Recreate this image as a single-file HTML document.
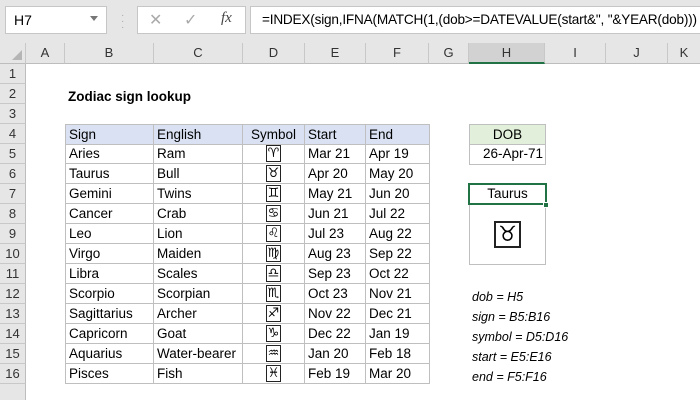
<!DOCTYPE html>
<html><head><style>
*{margin:0;padding:0;box-sizing:border-box}
body{width:700px;height:400px;overflow:hidden;background:#fff;font-family:"Liberation Sans",Calibri,sans-serif;position:relative;font-size:13px;color:#000}
.a{position:absolute}
.top{left:0;top:0;width:700px;height:43px;background:#e6e6e6}
.nb{left:5px;top:6px;width:102px;height:28px;background:#fff;border:1px solid #c6c6c6;font-size:14px;padding:5px 0 0 8px}
.fx{left:137px;top:6px;width:109px;height:28px;background:#fff;border:1px solid #c6c6c6}
.fb{left:250px;top:6px;width:450px;height:28px;background:#fff;border:1px solid #c6c6c6;border-right:none;font-size:13.6px;letter-spacing:-0.2px;padding:5px 0 0 11px;white-space:nowrap;overflow:hidden}
.ch{top:43px;height:21px;background:#e6e6e6;border-right:1px solid #c8c8c8;border-bottom:1px solid #bdbdbd;text-align:center;font-size:13px;color:#333;line-height:20px;overflow:hidden}
.rh{left:0;width:26px;height:20px;background:#e6e6e6;border-bottom:1px solid #c8c8c8;border-right:1px solid #bdbdbd;text-align:center;color:#333;line-height:20px;font-size:13px}
.c{height:20px;border-right:1px solid #bfbfbf;border-bottom:1px solid #bfbfbf;line-height:20px;padding-left:3px;white-space:nowrap;font-size:13.5px}
.s{display:inline-block;width:15px;height:17px;border:1px solid #222;line-height:15px;text-align:center;font-family:"DejaVu Sans",sans-serif;font-size:13px;vertical-align:middle;margin-top:-2px}
.i{font-style:italic;font-size:12.5px}
</style></head><body>
<div class="a top"></div>
<div class="a nb">H7<span style="position:absolute;right:8px;top:9px;border:4px solid transparent;border-top:5px solid #777"></span></div>
<div class="a" style="left:121px;top:13px;color:#aaa;font-size:10px;line-height:6px">·<br>·<br>·</div>
<div class="a fx"><span class="a" style="left:11px;top:3px;color:#aaa;font-size:16px">✕</span><span class="a" style="left:46px;top:3px;color:#aaa;font-size:16px">✓</span><span class="a" style="left:83px;top:3px;color:#444;font-family:'Liberation Serif',serif;font-style:italic;font-size:15px">fx</span></div>
<div class="a fb">=INDEX(sign,IFNA(MATCH(1,(dob&gt;=DATEVALUE(start&amp;", "&amp;YEAR(dob)))</div>
<div class="a ch" style="left:0;width:26px"><span class="a" style="right:3px;bottom:3px;border:5px solid transparent;border-right-color:#b5b5b5;border-bottom-color:#b5b5b5"></span></div>
<div class="a ch" style="left:26px;width:39px">A</div>
<div class="a ch" style="left:65px;width:89px">B</div>
<div class="a ch" style="left:154px;width:89px">C</div>
<div class="a ch" style="left:243px;width:62px">D</div>
<div class="a ch" style="left:305px;width:61px">E</div>
<div class="a ch" style="left:366px;width:63px">F</div>
<div class="a ch" style="left:429px;width:40px">G</div>
<div class="a ch" style="left:469px;width:76px;background:#d2d2d2;border-bottom:2px solid #217346">H</div>
<div class="a ch" style="left:545px;width:61px">I</div>
<div class="a ch" style="left:606px;width:62px">J</div>
<div class="a ch" style="left:668px;width:32px;border-right:none">K</div>
<div id="rows"></div>
<div class="a" style="left:68px;top:89px;font-weight:bold;font-size:13.5px">Zodiac sign lookup</div>
<div id="tbl"></div>
<div class="a c" style="left:469px;top:124px;width:77px;background:#e2efda;border:1px solid #bfbfbf;text-align:center;padding:0;height:21px">DOB</div>
<div class="a c" style="left:469px;top:144px;width:77px;border:1px solid #bfbfbf;border-top:none;text-align:right;padding-right:2px;height:21px">26-Apr-71</div>
<div class="a" style="left:469px;top:184px;width:77px;height:81px;border:1px solid #bfbfbf"></div>
<div class="a" style="left:468px;top:183px;width:79px;height:22px;border:2px solid #217346;text-align:center;line-height:18px;font-size:13.5px">Taurus</div>
<div class="a" style="left:543px;top:202px;width:6px;height:6px;background:#217346;border:1px solid #fff"></div>
<div class="a" style="left:494px;top:221px;width:27px;height:27px;border:2px solid #222;text-align:center;line-height:23px;font-family:'DejaVu Sans',sans-serif;font-size:21px">♉&#xFE0E;</div>
<div class="a i" style="left:472px;top:290px">dob = H5</div>
<div class="a i" style="left:472px;top:310px">sign = B5:B16</div>
<div class="a i" style="left:472px;top:330px">symbol = D5:D16</div>
<div class="a i" style="left:472px;top:350px">start = E5:E16</div>
<div class="a i" style="left:472px;top:370px">end = F5:F16</div>
<script>
var r='';for(var i=1;i<=16;i++){r+='<div class="a rh" style="top:'+(44+i*20)+'px">'+i+'</div>';}
r+='<div class="a rh" style="top:384px;height:16px;border-bottom:none"></div>';
document.getElementById('rows').outerHTML=r;
var d=[["Sign","English","Symbol","Start","End"],["Aries","Ram","♈","Mar 21","Apr 19"],["Taurus","Bull","♉","Apr 20","May 20"],["Gemini","Twins","♊","May 21","Jun 20"],["Cancer","Crab","♋","Jun 21","Jul 22"],["Leo","Lion","♌","Jul 23","Aug 22"],["Virgo","Maiden","♍","Aug 23","Sep 22"],["Libra","Scales","♎","Sep 23","Oct 22"],["Scorpio","Scorpian","♏","Oct 23","Nov 21"],["Sagittarius","Archer","♐","Nov 22","Dec 21"],["Capricorn","Goat","♑","Dec 22","Jan 19"],["Aquarius","Water-bearer","♒","Jan 20","Feb 18"],["Pisces","Fish","♓","Feb 19","Mar 20"]];
var xs=[65,154,243,305,366,430],t='';
d.forEach(function(row,ri){var y=124+ri*20;row.forEach(function(v,ci){var st='left:'+xs[ci]+'px;top:'+y+'px;width:'+(xs[ci+1]-xs[ci])+'px;';if(ci==0)st+='border-left:1px solid #bfbfbf;';if(ri==0)st+='background:#d9e1f2;border-top:1px solid #bfbfbf;height:21px;';var c=v;if(ci==2){if(ri>0)c='<span class="s">'+v+'&#xFE0E;</span>';st+='text-align:center;padding:0;';}t+='<div class="a c" style="'+st+'">'+c+'</div>';});});
document.getElementById('tbl').outerHTML=t;
</script>
</body></html>
